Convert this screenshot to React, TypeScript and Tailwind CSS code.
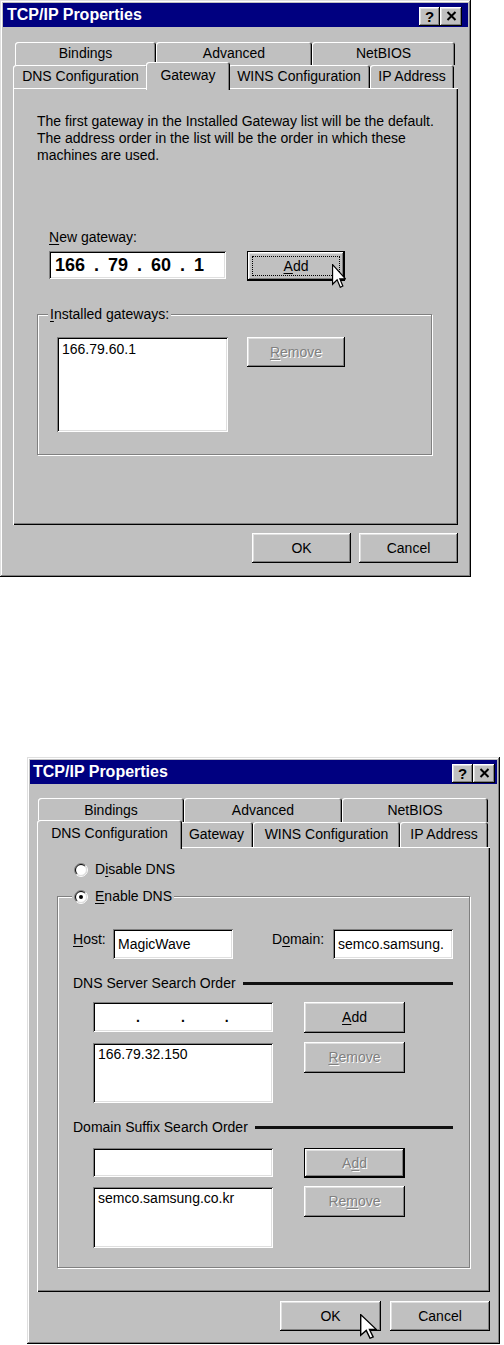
import React from "react";

const FRAME =
  "bg-[#c0c0c0] shadow-[inset_-1px_-1px_0_#000,inset_1px_1px_0_#dfdfdf,inset_-2px_-2px_0_#808080,inset_2px_2px_0_#fff]";
const RAISED =
  "shadow-[inset_-1px_-1px_0_#000,inset_1px_1px_0_#fff,inset_-2px_-2px_0_#808080,inset_2px_2px_0_#dfdfdf]";
const DEFAULT_BTN =
  "border border-black shadow-[inset_-1px_-1px_0_#000,inset_1px_1px_0_#fff,inset_-2px_-2px_0_#808080,inset_2px_2px_0_#dfdfdf]";
const SUNKEN =
  "bg-white shadow-[inset_1px_1px_0_#808080,inset_-1px_-1px_0_#fff,inset_2px_2px_0_#000,inset_-2px_-2px_0_#dfdfdf]";
const PANEL =
  "bg-[#c0c0c0] shadow-[inset_1px_1px_0_#fff,inset_-1px_-1px_0_#000,inset_-2px_-2px_0_#808080]";
const GROUP = "border border-[#808080] shadow-[inset_1px_1px_0_#fff,1px_1px_0_#fff]";
const TAB =
  "flex items-center justify-center rounded-t-[3px] bg-[#c0c0c0] shadow-[inset_1px_1px_0_#fff,inset_-1px_0_0_#000,inset_-2px_0_0_#808080]";

function U({ children }: { children: React.ReactNode }) {
  return <span className="underline decoration-1 underline-offset-[2px]">{children}</span>;
}

function Btn({
  className = "",
  children,
  disabled = false,
  isDefault = false,
  focus = false,
  cursor,
}: {
  className?: string;
  children: React.ReactNode;
  disabled?: boolean;
  isDefault?: boolean;
  focus?: boolean;
  cursor?: React.ReactNode;
}) {
  return (
    <div className={`relative flex bg-[#c0c0c0] ${isDefault ? DEFAULT_BTN : RAISED} ${className}`}>
      <div
        className={`flex flex-1 items-center justify-center ${
          focus ? "m-[4px] border border-dotted border-black" : ""
        } ${disabled ? "text-[#808080] [text-shadow:1px_1px_0_#fff]" : "text-black"}`}
      >
        {children}
      </div>
      {cursor}
    </div>
  );
}

function Cursor({ className = "" }: { className?: string }) {
  return (
    <svg
      className={`pointer-events-none absolute z-20 ${className}`}
      viewBox="0 0 12 19.5"
      preserveAspectRatio="none"
    >
      <path
        d="M0.5 0.5 V16.5 L4.4 12.8 L7.1 18.9 L9.3 17.9 L6.7 12 H11.5 Z"
        fill="#fff"
        stroke="#000"
        strokeWidth="1"
        strokeLinejoin="miter"
      />
    </svg>
  );
}

function Radio({ checked = false }: { checked?: boolean }) {
  return (
    <svg width="14" height="14" viewBox="0 0 14 14" className="shrink-0">
      <circle cx="7" cy="7" r="5.5" fill="#fff" />
      <path d="M2.404 11.596 A6.5 6.5 0 0 1 11.596 2.404" stroke="#808080" fill="none" />
      <path d="M11.596 2.404 A6.5 6.5 0 0 1 2.404 11.596" stroke="#fff" fill="none" />
      <path d="M3.111 10.889 A5.5 5.5 0 0 1 10.889 3.111" stroke="#000" fill="none" />
      <path d="M10.889 3.111 A5.5 5.5 0 0 1 3.111 10.889" stroke="#dfdfdf" fill="none" />
      {checked && <circle cx="7" cy="7" r="2" fill="#000" />}
    </svg>
  );
}

function TitleBar({ className = "" }: { className?: string }) {
  return (
    <div className={`flex h-[24px] items-center justify-between bg-[#000080] ${className}`}>
      <span className="text-[16px] font-bold leading-[20px] text-white">TCP/IP Properties</span>
      <div className="flex pt-[2px]">
        <div
          className={`flex h-[19px] w-[21px] items-center justify-center bg-[#c0c0c0] text-[15px] font-bold leading-[15px] ${RAISED}`}
        >
          ?
        </div>
        <div className={`flex h-[19px] w-[22px] items-center justify-center bg-[#c0c0c0] ${RAISED}`}>
          <svg width="11" height="10" viewBox="0 0 11 10">
            <path d="M1.5 1 L9.5 9 M9.5 1 L1.5 9" stroke="#000" strokeWidth="2" />
          </svg>
        </div>
      </div>
    </div>
  );
}

function Tab({
  children,
  className = "",
  selected = false,
}: {
  children: React.ReactNode;
  className?: string;
  selected?: boolean;
}) {
  return (
    <div className={`${TAB} ${selected ? "relative z-10 -mx-[2px] -mb-[2px]" : "h-full"} ${className}`}>
      {children}
    </div>
  );
}

function GatewayDialog() {
  return (
    <div className={`flex h-[577px] w-[471px] flex-col p-[3px] ${FRAME}`}>
      <TitleBar className="pl-[4px] pr-[6px]" />
      <div className="mx-[10px] mt-[15px] flex flex-col">
        <div className="flex h-[23px] items-end pl-[2px]">
          <Tab className="w-[141px]">Bindings</Tab>
          <Tab className="w-[156px]">Advanced</Tab>
          <Tab className="w-[143px]">NetBIOS</Tab>
        </div>
        <div className="flex h-[23px] items-end">
          <Tab className="w-[135px]">DNS Configuration</Tab>
          <Tab selected className="h-[28px] w-[84px] pb-[1px]">
            Gateway
          </Tab>
          <Tab className="w-[142px]">WINS Configuration</Tab>
          <Tab className="w-[84px]">IP Address</Tab>
        </div>
        <div className={`flex h-[437px] flex-col pl-[24px] pt-[25px] ${PANEL}`}>
          <p className="whitespace-nowrap">
            The first gateway in the Installed Gateway list will be the default.
            <br />
            The address order in the list will be the order in which these
            <br />
            machines are used.
          </p>
          <div className="ml-[12px] mt-[65px]">
            <U>N</U>ew gateway:
          </div>
          <div className="ml-[12px] mt-[5px] flex items-start">
            <div
              className={`flex h-[28px] w-[177px] items-center pl-[6px] text-[18px] font-bold leading-[20px] [word-spacing:4px] ${SUNKEN}`}
            >
              166 . 79 . 60 . 1
            </div>
            <Btn
              isDefault
              focus
              className="ml-[21px] h-[30px] w-[98px]"
              cursor={<Cursor className="left-[84px] top-[12px] h-[24px] w-[14px]" />}
            >
              <span>
                <U>A</U>dd
              </span>
            </Btn>
          </div>
          <fieldset className={`mt-[25px] w-[395px] ${GROUP}`}>
            <legend className="ml-[10px] bg-[#c0c0c0] px-[2px]">
              <U>I</U>nstalled gateways:
            </legend>
            <div className="flex items-start pb-[22px] pl-[19px] pt-[14px]">
              <div className={`h-[95px] w-[171px] pl-[5px] pt-[4px] ${SUNKEN}`}>166.79.60.1</div>
              <Btn disabled className="ml-[19px] h-[30px] w-[98px]">
                <span>
                  <U>R</U>emove
                </span>
              </Btn>
            </div>
          </fieldset>
        </div>
        <div className="mt-[8px] flex justify-end gap-[8px]">
          <Btn className="h-[30px] w-[99px]">OK</Btn>
          <Btn className="h-[30px] w-[99px]">Cancel</Btn>
        </div>
      </div>
    </div>
  );
}

function DnsDialog() {
  return (
    <div className={`ml-[27px] mt-[180px] flex h-[587px] w-[473px] flex-col p-[3px] ${FRAME}`}>
      <TitleBar className="pl-[3px] pr-[2px]" />
      <div className="mx-[7px] mt-[14px] flex flex-col">
        <div className="flex h-[24px] items-end pl-[1px]">
          <Tab className="w-[146px]">Bindings</Tab>
          <Tab className="w-[158px]">Advanced</Tab>
          <Tab className="w-[146px]">NetBIOS</Tab>
        </div>
        <div className="flex h-[25px] items-end pl-[2px]">
          <Tab selected className="h-[29px] w-[145px] pb-[2px]">
            DNS Configuration
          </Tab>
          <Tab className="w-[73px]">Gateway</Tab>
          <Tab className="w-[147px]">WINS Configuration</Tab>
          <Tab className="w-[88px]">IP Address</Tab>
        </div>
        <div className={`flex h-[445px] flex-col ${PANEL}`}>
          <div className="ml-[37px] mt-[14px] flex h-[17px] items-center gap-[7px]">
            <Radio />
            <span>
              D<U>i</U>sable DNS
            </span>
          </div>
          <fieldset className={`ml-[20px] mt-[10px] w-[413px] ${GROUP}`}>
            <legend className="ml-[14px] bg-[#c0c0c0] px-[2px]">
              <span className="flex h-[17px] items-center gap-[7px]">
                <Radio checked />
                <span>
                  <U>E</U>nable DNS
                </span>
              </span>
            </legend>
            <div className="flex flex-col pb-[19px] pt-[24px]">
              <div className="flex items-start pl-[15px]">
                <div className="w-[40px] pt-[2px]">
                  <U>H</U>ost:
                </div>
                <div className={`flex h-[30px] w-[120px] items-center pl-[5px] ${SUNKEN}`}>MagicWave</div>
                <div className="ml-[39px] w-[61px] pt-[2px]">
                  D<U>o</U>main:
                </div>
                <div
                  className={`flex h-[30px] w-[120px] items-center overflow-hidden whitespace-nowrap pl-[5px] ${SUNKEN}`}
                >
                  semco.samsung.
                </div>
              </div>

              <div className="mt-[16px] flex items-center pl-[15px] pr-[16px]">
                <span className="whitespace-nowrap">DNS Server Search Order</span>
                <div className="ml-[7px] h-[3px] flex-1 bg-[#111]" />
              </div>

              <div className="mt-[10px] flex items-start pl-[35px]">
                <div className={`flex h-[30px] w-[180px] items-center font-bold ${SUNKEN}`}>
                  <span className="ml-[43px]">.</span>
                  <span className="ml-[41px]">.</span>
                  <span className="ml-[40px]">.</span>
                </div>
                <Btn className="ml-[31px] h-[31px] w-[101px]">
                  <span>
                    <U>A</U>dd
                  </span>
                </Btn>
              </div>

              <div className="mt-[9px] flex items-start pl-[35px]">
                <div className={`mt-[1px] h-[60px] w-[180px] pl-[5px] pt-[3px] ${SUNKEN}`}>166.79.32.150</div>
                <Btn disabled className="ml-[31px] h-[31px] w-[101px]">
                  <span>
                    <U>R</U>emove
                  </span>
                </Btn>
              </div>

              <div className="mt-[16px] flex items-center pl-[15px] pr-[16px]">
                <span className="whitespace-nowrap">Domain Suffix Search Order</span>
                <div className="ml-[7px] h-[3px] flex-1 bg-[#111]" />
              </div>

              <div className="mt-[12px] flex items-start pl-[35px]">
                <div className={`h-[29px] w-[180px] ${SUNKEN}`} />
                <Btn isDefault disabled className="ml-[31px] h-[30px] w-[101px]">
                  <span>
                    A<U>d</U>d
                  </span>
                </Btn>
              </div>

              <div className="mt-[8px] flex items-start pl-[35px]">
                <div className={`mt-[1px] h-[61px] w-[180px] pl-[5px] pt-[3px] ${SUNKEN}`}>semco.samsung.co.kr</div>
                <Btn disabled className="ml-[31px] h-[31px] w-[101px]">
                  <span>
                    Re<U>m</U>ove
                  </span>
                </Btn>
              </div>
            </div>
          </fieldset>
        </div>
        <div className="mt-[9px] flex justify-end gap-[9px]">
          <Btn
            className="h-[30px] w-[101px]"
            cursor={<Cursor className="left-[80px] top-[13px] h-[25px] w-[17px]" />}
          >
            OK
          </Btn>
          <Btn className="h-[30px] w-[100px]">Cancel</Btn>
        </div>
      </div>
    </div>
  );
}

export default function App() {
  return (
    <div className="h-[1345px] w-[504px] overflow-hidden bg-white font-['Liberation_Sans',Arial,sans-serif] text-[14px] leading-[17px] text-black">
      <GatewayDialog />
      <DnsDialog />
    </div>
  );
}
